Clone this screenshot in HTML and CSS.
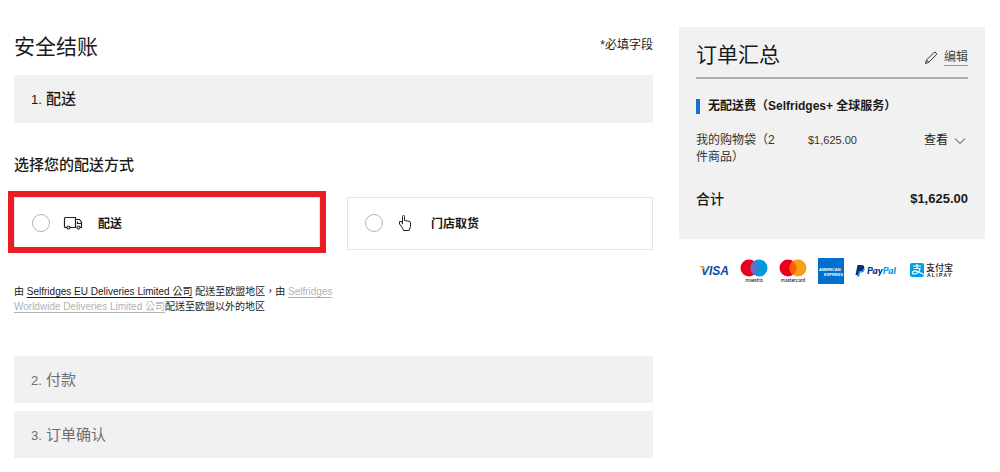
FILE: index.html
```html
<!DOCTYPE html>
<html lang="zh-CN">
<head>
  <meta charset="UTF-8">
  <meta name="viewport" content="width=device-width, initial-scale=1.0">
  <title>安全结账</title>
  <link rel="stylesheet" href="styles.css">
</head>
<body>
  <div class="page">
    <main class="checkout">
      <header class="checkout-header">
        <h1>安全结账</h1>
        <p class="required">*必填字段</p>
      </header>

      <section>
        <h2 class="step active"><span class="num">1.</span> 配送</h2>
        <form class="delivery">
          <h3 id="methodTitle">选择您的配送方式</h3>
          <div class="options" role="radiogroup" aria-labelledby="methodTitle">
            <label class="option highlight">
              <input type="radio" name="method" value="delivery">
              <svg class="option-icon" viewBox="0 0 20 20" aria-hidden="true">
                <path d="M4 14.500H2.500Q1.500 14.500 1.500 13.500V5.500Q1.500 4.500 2.500 4.500H12.500V14.500H7M12.500 6.500H16.500L18.500 9.500V14.500H17M14.500 8.500V10.500H18.500"/>
                <circle cx="5.500" cy="14.500" r="1.500"/>
                <circle cx="15.500" cy="14.500" r="1.500"/>
              </svg>
              <span>配送</span>
            </label>
            <label class="option">
              <input type="radio" name="method" value="collect">
              <svg class="option-icon thin" viewBox="0 0 20 20" aria-hidden="true">
                <path d="M6.500 11V3.500Q6.500 2.500 7.500 2.500Q8.500 2.500 8.500 3.500V7.500L13 8.200Q14.500 8.500 14.500 10V13.500L13 17.500H7.500L6.500 15L3.500 11V8.500H5.500L6.500 10.500"/>
              </svg>
              <span>门店取货</span>
            </label>
          </div>
          <p class="note" lang="zh-TW">由 <a href="#">Selfridges EU Deliveries Limited 公司</a> 配送至欧盟地区，由 <a href="#" class="muted">Selfridges Worldwide Deliveries Limited 公司</a>配送至欧盟以外的地区</p>
        </form>
      </section>

      <h2 class="step"><span class="num">2.</span> 付款</h2>
      <h2 class="step"><span class="num">3.</span> 订单确认</h2>
    </main>

    <aside>
      <section class="summary">
        <header class="summary-header">
          <h2>订单汇总</h2>
          <a href="#" class="edit">
            <svg viewBox="0 0 14 14" aria-hidden="true">
              <path d="M1.500 12.500L2.500 9L10 1.500Q11 .8 12 1.800Q13 2.800 12.300 3.800L4.800 11.300ZM2.500 9L4.800 11.300"/>
            </svg>
            <span>编辑</span>
          </a>
        </header>
        <p class="promo">无配送费（Selfridges+ 全球服务）</p>
        <div class="bag">
          <span>我的购物袋（2 件商品）</span>
          <span class="price">$1,625.00</span>
          <button type="button">
            查看
            <svg viewBox="0 0 12 8" aria-hidden="true"><path d="M1 1.500L6 6.500L11 1.500"/></svg>
          </button>
        </div>
        <div class="total">
          <span>合计</span>
          <strong>$1,625.00</strong>
        </div>
      </section>

      <ul class="payments">
        <li>
          <svg width="30" height="26" viewBox="0 0 30 26" role="img" aria-label="Visa">
            <text x="2" y="17" class="visa">VISA</text>
            <path d="M0 8H4.500L6 12.500Q4 9.500 0 8.500Z" fill="#f7a823"/>
          </svg>
        </li>
        <li>
          <svg width="28" height="26" viewBox="0 0 28 26" role="img" aria-label="Maestro">
            <circle cx="9" cy="10" r="8.500" fill="#eb001b"/>
            <circle cx="19" cy="10" r="8.500" fill="#0099df"/>
            <path d="M14 3.130A8.500 8.500 0 0 1 14 16.870A8.500 8.500 0 0 1 14 3.130Z" fill="#6c6bbd"/>
            <text x="14" y="24" class="brand">maestro</text>
          </svg>
        </li>
        <li>
          <svg width="28" height="26" viewBox="0 0 28 26" role="img" aria-label="Mastercard">
            <circle cx="9" cy="10" r="8.500" fill="#eb001b"/>
            <circle cx="19" cy="10" r="8.500" fill="#f79e1b"/>
            <path d="M14 3.130A8.500 8.500 0 0 1 14 16.870A8.500 8.500 0 0 1 14 3.130Z" fill="#ff5f00"/>
            <text x="14" y="24" class="brand">mastercard</text>
          </svg>
        </li>
        <li>
          <svg width="26" height="26" viewBox="0 0 26 26" role="img" aria-label="American Express">
            <rect width="26" height="26" fill="#016fd0"/>
            <text x="1" y="13" class="amex">AMERICAN</text>
            <text x="6" y="18" class="amex">EXPRESS</text>
          </svg>
        </li>
        <li>
          <svg width="44" height="26" viewBox="0 0 44 26" role="img" aria-label="PayPal">
            <path d="M2.500 7H7Q10 7.500 9 10.500Q8 13.500 5 13.500H4L3.300 17H.5Z" fill="#003087"/>
            <path d="M9.500 9Q10.500 14.500 6 14.500H5L4.300 18.500H2L2.300 17H3.300L4 13.500H5Q9 13.500 9.500 9Z" fill="#009cde"/>
            <text x="12" y="16" class="paypal"><tspan fill="#003087">Pay</tspan><tspan fill="#009cde">Pal</tspan></text>
          </svg>
        </li>
        <li>
          <svg width="43" height="26" viewBox="0 0 43 26" role="img" aria-label="支付宝 Alipay">
            <rect y="5" width="14" height="14" rx="2" fill="#00a0e9"/>
            <path d="M3 8H11M7 6V10.500M4 10.500H10Q9 15.500 4.500 16Q2 16 2.500 14Q4 12 7.500 13.500L14 16.500" fill="none" stroke="#fff" stroke-width="1.200"/>
            <text x="16" y="13" class="alipay">支付宝</text>
            <text x="17" y="19" class="alipay-en">A L I P A Y</text>
          </svg>
        </li>
      </ul>
    </aside>
  </div>
</body>
</html>
```

FILE: styles.css
```css
* {
  box-sizing: border-box;
}
body {
  margin: 0;
  font-family: "Liberation Sans", "Noto Sans CJK SC", sans-serif;
  font-size: 12px;
  line-height: 17px;
  color: #1a1a1a;
  background-color: #fff;
}
h1, h2, h3, p, ul {
  margin: 0;
  padding: 0;
}
a {
  color: inherit;
}
.page {
  display: grid;
  grid-template-columns: minmax(0, 1fr) 306px;
  gap: 26px;
  align-items: start;
  padding: 27px 15px 14px 14px;
}
h1, .summary h2 {
  font-size: 21px;
  line-height: 30px;
  font-weight: 400;
}

/* Checkout steps */
.checkout-header {
  display: flex;
  justify-content: space-between;
  align-items: center;
  padding: 5px 0 13px;
}
.required {
  padding-bottom: 4px;
}
.step {
  padding: 12px 17px;
  margin-bottom: 8px;
  font-size: 15px;
  line-height: 23px;
  font-weight: 400;
  color: #6e6e6e;
  background-color: #f1f1f1;
}
.step.active {
  margin: 0;
  padding-bottom: 13px;
  font-weight: 500;
  color: #1a1a1a;
}
.num {
  font-size: 13px;
  line-height: 1;
}
.delivery {
  padding: 31px 0 42px;
}
h3 {
  font-size: 15px;
  line-height: 22px;
  font-weight: 500;
}
.options {
  display: grid;
  grid-template-columns: 1fr 1fr;
  gap: 27px;
  margin-top: 21px;
}
.option {
  position: relative;
  display: flex;
  align-items: center;
  height: 53px;
  padding: 0 17px 2px;
  border: 1px solid #e6e6e6;
  font-weight: 700;
  cursor: pointer;
}
.option span {
  padding-top: 4px;
}
/* Red frame around the delivery option */
.option.highlight::after {
  content: "";
  position: absolute;
  inset: -7px -7px -4px;
  border: 6px solid #ed1c24;
}
.option input {
  appearance: none;
  width: 18px;
  height: 18px;
  margin: 0;
  border: 1px solid #b5b5b5;
  border-radius: 50%;
  background-color: #fff;
}
.option input:checked {
  border: 5px solid #1a1a1a;
}
.option-icon {
  width: 20px;
  height: 20px;
  margin: 0 15px 0 13px;
  fill: none;
  stroke: #222;
  stroke-width: 1.2;
}
.option-icon.thin {
  stroke-width: 1;
}
.note {
  max-width: 330px;
  margin-top: 34px;
  font-family: "Liberation Sans", "Noto Sans CJK TC", sans-serif;
  font-size: 10px;
  line-height: 15px;
}
.note a {
  text-underline-offset: 2px;
}
.note .muted {
  color: #b3b3b3;
}

/* Order summary */
.summary {
  padding: 13px 17px 30px;
  background-color: #f1f1f1;
}
.summary-header {
  display: flex;
  justify-content: space-between;
  align-items: center;
  padding-bottom: 7px;
  border-bottom: 2px solid #adb0ad;
}
.edit {
  display: flex;
  align-items: center;
  gap: 6px;
  padding-top: 5px;
  color: #444;
  text-decoration: none;
}
.edit span {
  border-bottom: 1px solid #999;
  line-height: 15px;
}
.edit svg {
  width: 14px;
  height: 14px;
  fill: none;
  stroke: #333;
}
.promo {
  margin-top: 20px;
  padding-left: 8px;
  border-left: 4px solid #1a6fd4;
  line-height: 15px;
  font-weight: 700;
}
.bag {
  display: grid;
  grid-template-columns: 84px 1fr auto;
  column-gap: 28px;
  align-items: start;
  margin-top: 18px;
  color: #333;
}
.price {
  font-size: 11px;
}
.bag button {
  display: flex;
  align-items: center;
  gap: 6px;
  padding: 0 2px 0 0;
  border: none;
  background: none;
  font: inherit;
  color: #1a1a1a;
  cursor: pointer;
}
.bag svg {
  width: 12px;
  height: 8px;
  fill: none;
  stroke: #333;
}
.total {
  display: flex;
  justify-content: space-between;
  align-items: center;
  margin-top: 23px;
  font-size: 14px;
  line-height: 20px;
  font-weight: 500;
}
.total strong {
  font-size: 13px;
}

/* Payment logos */
.payments {
  display: flex;
  gap: 11px;
  padding: 19px 0 0 20px;
  list-style: none;
}
.payments svg {
  display: block;
}
.visa {
  font-size: 12px;
  font-weight: 700;
  font-style: italic;
  fill: #0a4ea2;
}
.brand {
  font-family: Lato, sans-serif;
  font-size: 5px;
  text-anchor: middle;
}
.amex {
  font-size: 4px;
  font-weight: 700;
  fill: #fff;
}
.paypal {
  font-family: Lato, sans-serif;
  font-size: 10px;
  font-weight: 900;
  font-style: italic;
}
.alipay {
  font-size: 9px;
  font-weight: 500;
  fill: #222;
}
.alipay-en {
  font-size: 5px;
  font-weight: 700;
  fill: #222;
}
```
